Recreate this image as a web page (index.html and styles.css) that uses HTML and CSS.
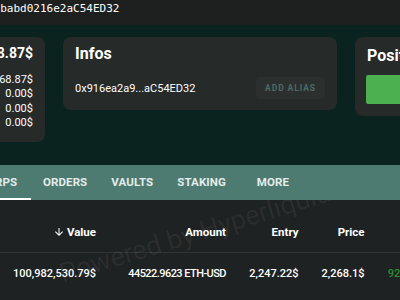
FILE: index.html
```html
<!DOCTYPE html>
<html>
<head>
<meta charset="utf-8">
<link rel="stylesheet" href="styles.css">
</head>
<body>
<div class="page">
  <div class="topbar"><span class="addr">0x916ea2a9C1b2f3E4d5A6b7c8babd0216e2aC54ED32</span></div>

  <div class="cards">
    <div class="card card-total">
      <div class="card-title right">100,950,968.87$</div>
      <div class="rows">
        <div class="row"><span>Perps</span><span>100,950,968.87$</span></div>
        <div class="row"><span>Spot</span><span>0.00$</span></div>
        <div class="row"><span>Vaults</span><span>0.00$</span></div>
        <div class="row"><span>Staking</span><span>0.00$</span></div>
      </div>
    </div>

    <div class="card card-infos">
      <div class="card-title">Infos</div>
      <div class="info-row">
        <span class="short-addr">0x916ea2a9...aC54ED32</span>
        <button class="alias-btn">ADD ALIAS</button>
      </div>
    </div>

    <div class="card card-pos">
      <div class="card-title">Positions</div>
      <div class="pos-bar"></div>
    </div>
  </div>

  <div class="tabs">
    <div class="tab active">PERPS</div>
    <div class="tab">ORDERS</div>
    <div class="tab">VAULTS</div>
    <div class="tab">STAKING</div>
    <div class="tab tab-more">MORE</div>
  </div>

  <div class="table">
    <div class="grid head">
      <div class="cell left">Coin</div>
      <div class="cell"><svg class="arrow" viewBox="0 0 24 24"><path d="M20 12l-1.41-1.41L13 16.17V4h-2v12.17l-5.58-5.59L4 12l8 8 8-8z"/></svg>Value</div>
      <div class="cell">Amount</div>
      <div class="cell">Entry</div>
      <div class="cell">Price</div>
      <div class="cell">PnL</div>
    </div>
    <div class="grid body-row">
      <div class="cell left">ETH</div>
      <div class="cell">100,982,530.79$</div>
      <div class="cell amount">44522.9623 ETH-USD</div>
      <div class="cell">2,247.22$</div>
      <div class="cell">2,268.1$</div>
      <div class="cell pnl">929,906.84$</div>
    </div>
    <div class="watermark">Powered by Hyperliquid</div>
  </div>
</div>
</body>
</html>
```
FILE: styles.css
```css
html, body {
  margin: 0;
  padding: 0;
}
body {
  background: #0b231e;
  overflow: hidden;
  font-family: Roboto, "Liberation Sans", sans-serif;
  color: #ffffff;
  height: 300px;
}
.page {
  margin-left: -175px;
  width: 760px;
}
.topbar {
  background: #1e2020;
  height: 14px;
  padding: 2px 0 9px 3px;
  font-family: "DejaVu Sans Mono", monospace;
  font-size: 11px;
  line-height: 14px;
  white-space: nowrap;
}
.cards {
  display: flex;
  align-items: flex-start;
  gap: 18px;
  padding: 0 16px;
  margin-top: 12px;
}
.card {
  background: #262a29;
  border-radius: 8px;
  padding: 7px 12px 12px;
  flex: none;
}
.card-title {
  font-size: 16px;
  font-weight: 700;
  line-height: 19px;
  white-space: nowrap;
}
.card-total .card-title {
  font-size: 14px;
}
.right { text-align: right; }
.card-total { width: 180px; }
.rows {
  margin-top: 10px;
  font-size: 11px;
  line-height: 14.3px;
}
.row {
  display: flex;
  justify-content: space-between;
}
.card-infos {
  width: 250px;
  padding-bottom: 11px;
}
.info-row {
  margin-top: 14px;
  display: flex;
  align-items: center;
  justify-content: space-between;
}
.short-addr {
  font-size: 11px;
}
.alias-btn {
  height: 22px;
  width: 69px;
  border: none;
  border-radius: 4px;
  background: #2b302f;
  color: #4b6b63;
  font-family: Roboto, "Liberation Sans", sans-serif;
  font-weight: 700;
  font-size: 8.5px;
  letter-spacing: 0.9px;
  padding: 0;
}
.card-pos {
  width: 200px;
  padding-top: 9px;
}
.pos-bar {
  margin-top: 10px;
  margin-left: -1px;
  height: 29px;
  background: #4caf50;
  border-radius: 2px;
}
.tabs {
  margin-top: 23px;
  height: 35px;
  background: #4e7b71;
  display: flex;
  padding-left: 142px;
}
.tab {
  min-width: 64px;
  padding: 0 12px;
  box-sizing: border-box;
  text-align: center;
  font-size: 11.5px;
  font-weight: 700;
  letter-spacing: 0.1px;
  line-height: 35px;
  color: #e3ecea;
}
.tab-more {
  min-width: 70px;
}
.tab.active {
  box-shadow: inset 0 -2px 0 #ffffff;
}
.table {
  position: relative;
  background: #1f2222;
  padding-top: 11px;
  height: 120px;
  overflow: hidden;
}
.grid {
  display: grid;
  grid-template-columns: 150px 121px 130px 72.5px 66px 85px;
  align-items: center;
}
.head {
  height: 41px;
  border-bottom: 1px solid #303433;
  font-size: 11.5px;
  font-weight: 700;
}
.body-row {
  height: 40px;
  font-size: 11px;
  font-weight: 500;
}
.cell {
  text-align: right;
  white-space: nowrap;
  display: flex;
  justify-content: flex-end;
  align-items: center;
}
.cell.left {
  justify-content: flex-start;
  padding-left: 16px;
}
.amount {
  letter-spacing: -0.55px;
}
.arrow {
  width: 12px;
  height: 12px;
  fill: #ffffff;
  margin-right: 2px;
}
.pnl {
  color: #2f8a35;
}
.watermark {
  position: absolute;
  left: 370px;
  top: 33px;
  transform: translate(-50%, -50%) rotate(-17deg);
  font-size: 27px;
  font-weight: 400;
  color: rgba(255, 255, 255, 0.06);
  white-space: nowrap;
  pointer-events: none;
}
```
